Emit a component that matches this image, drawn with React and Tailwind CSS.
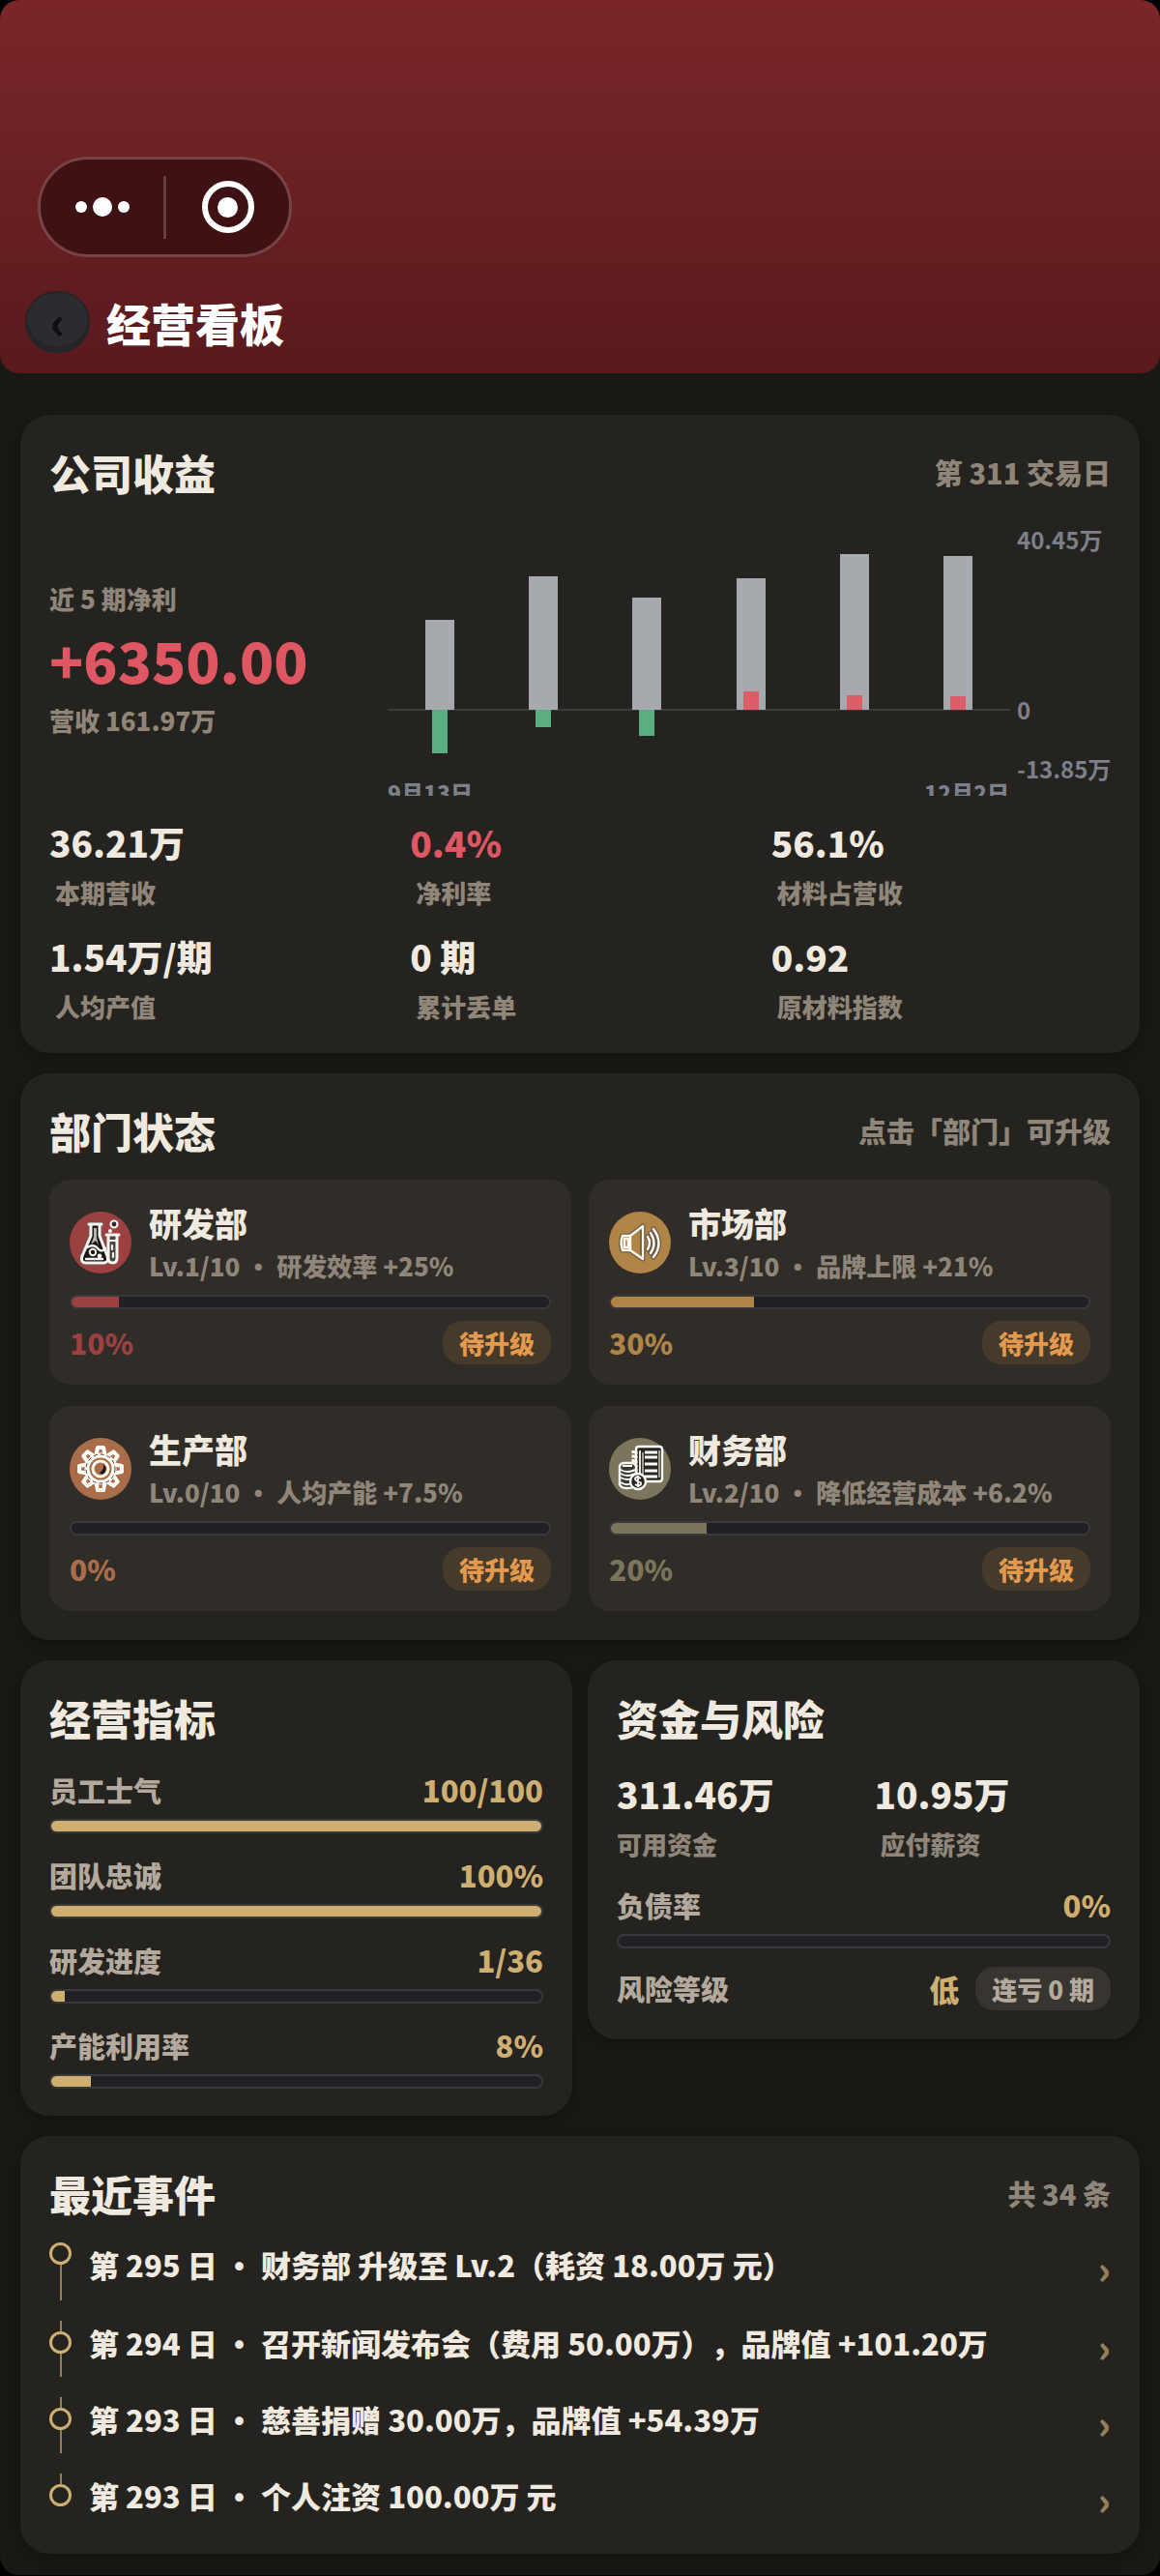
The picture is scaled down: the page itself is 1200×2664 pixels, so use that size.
import clsx from 'clsx';

const MONTHS = [
  { revenue: 93, profit: -45 },
  { revenue: 138, profit: -18 },
  { revenue: 116, profit: -27 },
  { revenue: 136, profit: 19 },
  { revenue: 161, profit: 15 },
  { revenue: 159, profit: 14 },
];

const STATS = [
  { value: '36.21万', label: '本期营收' },
  { value: '0.4%', label: '净利率', color: 'text-[#de5763]' },
  { value: '56.1%', label: '材料占营收' },
  { value: '1.54万/期', label: '人均产值' },
  { value: '0 期', label: '累计丢单' },
  { value: '0.92', label: '原材料指数' },
];

const DEPARTMENTS = [
  {
    name: '研发部',
    info: 'Lv.1/10 • 研发效率 +25%',
    percent: 10,
    icon: FlaskIcon,
    bg: 'bg-[#9c4041]',
    text: 'text-[#9c4041]',
  },
  {
    name: '市场部',
    info: 'Lv.3/10 • 品牌上限 +21%',
    percent: 30,
    icon: SpeakerIcon,
    bg: 'bg-[#b08346]',
    text: 'text-[#b08346]',
  },
  {
    name: '生产部',
    info: 'Lv.0/10 • 人均产能 +7.5%',
    percent: 0,
    icon: GearIcon,
    bg: 'bg-[#a96d4a]',
    text: 'text-[#a96d4a]',
  },
  {
    name: '财务部',
    info: 'Lv.2/10 • 降低经营成本 +6.2%',
    percent: 20,
    icon: LedgerIcon,
    bg: 'bg-[#7b765b]',
    text: 'text-[#7b765b]',
  },
];

const METRICS = [
  { label: '员工士气', value: '100/100', percent: 100 },
  { label: '团队忠诚', value: '100%', percent: 100 },
  { label: '研发进度', value: '1/36', percent: 2.8 },
  { label: '产能利用率', value: '8%', percent: 8 },
];

const EVENTS = [
  '第 295 日 • 财务部 升级至 Lv.2（耗资 18.00万 元）',
  '第 294 日 • 召开新闻发布会（费用 50.00万），品牌值 +101.20万',
  '第 293 日 • 慈善捐赠 30.00万，品牌值 +54.39万',
  '第 293 日 • 个人注资 100.00万 元',
];

/* ─── Department icons ──────────────────────────────── */

function FlaskIcon() {
  return (
    <svg viewBox="0 0 64 64" className="size-full" fill="none" strokeLinejoin="round" strokeLinecap="round">
      <path d="M20 13h13M22 14v11L13 46q-2 7 4 7h19q5-1 3-7L31 25V14" fill="#191815" stroke="#6b5a56" strokeWidth="5" />
      <path d="M20 13h13M22 14v11L13 46q-2 7 4 7h19q5-1 3-7L31 25V14" fill="#191815" stroke="#f6f3ee" strokeWidth="3" />
      <path d="M25 17v9l-3 8 5-4 3 5-2-8V17z" fill="#b9b5ae" />
      <path d="M18 37q7-4 11 1t8 0" stroke="#f6f3ee" strokeWidth="2.4" />
      <circle cx="24" cy="42" r="3.2" stroke="#f6f3ee" strokeWidth="2" />
      <circle cx="31" cy="46" r="2.4" fill="#f6f3ee" />
      <path d="M17 49h17" stroke="#f6f3ee" strokeWidth="2.4" />
      <path d="M38 24h13M40 24v24q0 5 4.5 5t4.5-5V24" fill="#4a4642" stroke="#f6f3ee" strokeWidth="3" />
      <path d="M41 30h7M44 35v4M45 43v4" stroke="#f6f3ee" strokeWidth="2.2" />
      <circle cx="46" cy="13" r="3.5" fill="#2b2724" stroke="#f6f3ee" strokeWidth="2.2" />
      <circle cx="42" cy="20" r="2" fill="#f6f3ee" />
    </svg>
  );
}

function SpeakerIcon() {
  return (
    <svg viewBox="0 0 64 64" className="size-full" fill="none" strokeLinejoin="round" strokeLinecap="round">
      <g stroke="#6b5c47" strokeWidth="5">
        <path d="M14 25h8l13-10v34L22 40h-8q-3-7 0-15z" />
        <path d="M40 26q4 6 0 13M43 22q7 11 0 21M46 18q11 15 0 29" />
      </g>
      <path d="M14 25h8l13-10v34L22 40h-8q-3-7 0-15z" fill="#b08346" />
      <g stroke="#fffaf0" strokeWidth="2.4">
        <path d="M14 25q-3 7 0 15h8l13 9V15L22 25z" />
        <path d="M16 28v9M20 28v9M16 28h4M16 37h4M22 25v15" />
        <path d="M40 26q4 6 0 13M43 22q7 11 0 21M46 18q11 15 0 29" />
      </g>
      <path d="M33 19v26" stroke="#4a3c26" strokeWidth="1" />
    </svg>
  );
}

function GearIcon() {
  const teeth = [0, 45, 90, 135, 180, 225, 270, 315];
  return (
    <svg viewBox="0 0 64 64" className="size-full" fill="none" strokeLinejoin="round">
      {teeth.map((a) => (
        <path key={a} d="M27 20l2-10h6l2 10" transform={`rotate(${a} 32 32)`} fill="#a96d4a" stroke="#fffdf8" strokeWidth="4" />
      ))}
      <circle cx="32" cy="32" r="14" fill="#a96d4a" stroke="#fffdf8" strokeWidth="5" />
      <circle cx="32" cy="32" r="15" stroke="#4a3628" strokeWidth="1" strokeDasharray="4 3" />
      <circle cx="32" cy="32" r="8" fill="#a96d4a" stroke="#fffdf8" strokeWidth="3" />
      <path d="M35 27q5 5 0 10-3 1-4-1 5-3 4-9z" fill="#191815" />
    </svg>
  );
}

function LedgerIcon() {
  return (
    <svg viewBox="0 0 64 64" className="size-full" fill="none" strokeLinejoin="round">
      <path d="M28 12q0-3 3-3h21q3 0 3 3v30q0 3-3 3H31q-3 0-3-3z" fill="#26251f" stroke="#fffdf8" strokeWidth="2.4" />
      <path d="M32 13v26" stroke="#e6e3db" strokeWidth="2" />
      <path d="M35 15v26M52 13v28" stroke="#c9c6bd" strokeWidth="1.5" />
      <path d="M37 15h13M37 20h13M37 27h13M37 34h13M37 40h13" stroke="#fffdf8" strokeWidth="3" />
      <path d="M25 13v34M28 14v24" stroke="#fffdf8" strokeWidth="3" strokeDasharray="3 1.5" />
      <path d="M11 29q1-3 5-3h7q4 0 5 3v19q-2 4-9 4t-8-4z" fill="#3a3932" stroke="#fffdf8" strokeWidth="2.4" />
      <path d="M12 33q7 4 15 0M12 37q7 4 15 0M12 41q7 4 14 0M12 46q6 4 11 1M14 29h10" stroke="#fffdf8" strokeWidth="2" />
      <circle cx="30" cy="45" r="8" fill="#26251f" stroke="#fffdf8" strokeWidth="2.4" />
      <path d="M33 42q-5-3-6 0 0 2 3 3 4 1 3 3-2 3-6 0M30 39v12" stroke="#fffdf8" strokeWidth="1.8" />
    </svg>
  );
}

/* ─── Shared pieces ─────────────────────────────────── */

function Card({ title, note, className, children }) {
  return (
    <section
      className={clsx('rounded-[30px] bg-[#24231f] p-[30px] shadow-[0_4px_14px_rgba(0,0,0,0.3)]', className)}
    >
      <div className="flex items-center justify-between">
        <h2 className="text-[43px] leading-[58px] font-black text-[#efe9df]">{title}</h2>
        {note && <span className="text-[29px] leading-[58px] text-[#8f8679]">{note}</span>}
      </div>
      {children}
    </section>
  );
}

function ProgressBar({ label, percent, color }) {
  return (
    <div
      role="progressbar"
      aria-label={label}
      aria-valuenow={percent}
      aria-valuemin={0}
      aria-valuemax={100}
      className="h-[15px] w-full overflow-hidden rounded-full border-2 border-[#39383c] bg-[#212025]"
    >
      <div className={clsx('h-full', color)} style={{ width: `${percent}%` }} />
    </div>
  );
}

function Metric({ label, value, percent }) {
  return (
    <div>
      <div className="flex items-center justify-between leading-[48px]">
        <span className="text-[29px] text-[#b3a99c]">{label}</span>
        <span className="text-[31px] text-[#cfae72]">{value}</span>
      </div>
      <div className="mt-[6px]">
        <ProgressBar label={label} percent={percent} color="bg-[#cfae72]" />
      </div>
    </div>
  );
}

function Stat({ value, label, color = 'text-[#efe9df]', inset = true }) {
  return (
    <div>
      <div className={clsx('text-[37px] leading-[68px]', color)}>{value}</div>
      <div className={clsx('text-[26px] leading-9 text-[#8f8679]', inset && 'pl-[6px]')}>{label}</div>
    </div>
  );
}

function ProfitChart() {
  const step = 107.3;
  return (
    <svg viewBox="0 0 748 283" className="min-w-0 flex-1 overflow-hidden" role="img" aria-label="近期营收与净利">
      <path d="M0 194h644" stroke="#3b3b3e" strokeWidth="2" />
      {MONTHS.map(({ revenue, profit }, i) => {
        const center = Math.round(step * (i + 0.5));
        return (
          <g key={i}>
            <rect x={center - 15} y={194 - revenue} width="30" height={revenue} fill="#a6a9ae" />
            <rect
              x={center - 8}
              y={profit > 0 ? 194 - profit : 194}
              width="16"
              height={Math.abs(profit)}
              fill={profit > 0 ? '#dc5c68' : '#5aae81'}
            />
          </g>
        );
      })}
      <g className="font-bold" fill="#7d7f8b" fontSize="24">
        <text x="651" y="28">40.45万</text>
        <text x="651" y="204">0</text>
        <text x="651" y="265">-13.85万</text>
      </g>
      <g fill="#7d7f8b" fontSize="23">
        <text x="0" y="289">9月13日</text>
        <text x="643" y="289" textAnchor="end">12月2日</text>
      </g>
    </svg>
  );
}

/* ─── Page sections ─────────────────────────────────── */

function Header() {
  return (
    <header className="rounded-[20px] bg-linear-to-b from-[#7a2628] to-[#591a1d] px-[26px] pt-[162px] pb-[21px]">
      <div className="ml-[13px] flex h-[104px] w-[263px] items-center rounded-full border-[3px] border-[#774345] bg-[#3e1214]">
        <button type="button" aria-label="更多" className="flex flex-1 items-center justify-center gap-[6px]">
          <span className="size-3 rounded-full bg-white" />
          <span className="size-5 rounded-full bg-white" />
          <span className="size-3 rounded-full bg-white" />
        </button>
        <span className="h-[65px] w-[3px] bg-[#694041]" />
        <button type="button" aria-label="关闭" className="flex flex-1 items-center justify-center">
          <span className="flex size-[54px] items-center justify-center rounded-full border-[6px] border-white">
            <span className="size-[21px] rounded-full bg-white" />
          </span>
        </button>
      </div>
      <div className="mt-[35px] flex items-center gap-[17px]">
        <button
          type="button"
          aria-label="返回"
          className="flex h-16 w-[67px] items-center justify-center rounded-full border-2 border-[#252428] bg-[#2c2b30] pb-1 text-[46px] leading-none text-[#0f0f10] shadow-[inset_0_-5px_0_#252428]"
        >
          ‹
        </button>
        <h1 className="text-[46px] leading-[64px] font-black text-white">经营看板</h1>
      </div>
    </header>
  );
}

function Department({ name, info, percent, icon: Icon, bg, text }) {
  return (
    <button type="button" className="rounded-[22px] bg-[#302d29] p-[21px] text-left">
      <div className="flex items-center gap-[18px]">
        <div className={clsx('size-16 shrink-0 rounded-full', bg)}>
          <Icon />
        </div>
        <div className="whitespace-nowrap">
          <div className="text-[34px] leading-[48px] text-[#efe9df]">{name}</div>
          <div className="text-[26px] leading-10 text-[#8f8679]">{info}</div>
        </div>
      </div>
      <div className="mt-[10px]">
        <ProgressBar label={name} percent={percent} color={bg} />
      </div>
      <div className="mt-3 flex items-center justify-between">
        <span className={clsx('text-[30px] leading-[45px]', text)}>{percent}%</span>
        <span className="rounded-[20px] bg-[#463a2b] px-[17px] text-[26px] leading-[45px] text-[#e39a4e]">待升级</span>
      </div>
    </button>
  );
}

function EventRow({ text, first, last }) {
  return (
    <li>
      <button type="button" className="flex w-full items-stretch gap-[18px] text-left">
        <span className={clsx('flex w-[23px] shrink-0 flex-col items-center', first ? 'h-[60px]' : 'h-[58px]')}>
          {!first && <span className="h-[11px] w-[2px] bg-[#957f56]" />}
          <span className="size-[23px] shrink-0 rounded-full border-[3px] border-[#cfae72]" />
          {!last && <span className="w-[2px] flex-1 bg-[#957f56]" />}
        </span>
        <span className="flex-1 text-[31px] leading-[46px] text-[#efe9df] [text-spacing-trim:space-all]">{text}</span>
        <span className="pt-1 text-[40px] leading-[46px] text-[#957f56]">›</span>
      </button>
    </li>
  );
}

function App() {
  return (
    <div className="min-h-screen bg-black font-['Noto_Sans_CJK_SC',sans-serif] font-black">
      <div className="rounded-[20px] bg-[#191815]">
        <Header />

        <main className="flex flex-col gap-[21px] px-[21px] pt-[43px] pb-[22px]">
          <Card title="公司收益" note="第 311 交易日">
            <div className="mt-[23px] flex items-center">
              <div className="w-[350px] shrink-0 text-[26px] leading-9 text-[#8f8679]">
                <div>近 5 期净利</div>
                <div className="text-[58px] leading-[90px] text-[#de5763]">+6350.00</div>
                <div>营收 161.97万</div>
              </div>
              <ProfitChart />
            </div>
            <div className="mt-[14px] grid grid-cols-3 gap-x-[22px] gap-y-[14px]">
              {STATS.map((stat) => (
                <Stat key={stat.label} {...stat} />
              ))}
            </div>
          </Card>

          <Card title="部门状态" note="点击「部门」可升级">
            <div className="mt-[22px] grid grid-cols-2 gap-x-[18px] gap-y-[22px]">
              {DEPARTMENTS.map((dept) => (
                <Department key={dept.name} {...dept} />
              ))}
            </div>
          </Card>

          <div className="grid grid-cols-2 items-start gap-4">
            <Card title="经营指标" className="pb-7">
              <div className="mt-[22px] flex flex-col gap-[19px]">
                {METRICS.map((metric) => (
                  <Metric key={metric.label} {...metric} />
                ))}
              </div>
            </Card>

            <Card title="资金与风险">
              <div className="mt-4 mb-[21px] grid grid-cols-2 gap-x-[22px]">
                <Stat value="311.46万" label="可用资金" inset={false} />
                <Stat value="10.95万" label="应付薪资" />
              </div>
              <Metric label="负债率" value="0%" percent={0} />
              <div className="mt-[19px] flex items-center leading-[45px]">
                <span className="flex-1 text-[29px] text-[#b3a99c]">风险等级</span>
                <span className="text-[31px] text-[#cfae72]">低</span>
                <span className="ml-[17px] rounded-[20px] bg-[#383531] px-[17px] text-[26px] text-[#b3a99c]">
                  连亏 0 期
                </span>
              </div>
            </Card>
          </div>

          <Card title="最近事件" note="共 34 条" className="pb-[25px]">
            <ul className="mt-[22px] flex flex-col gap-[21px]">
              {EVENTS.map((text, i) => (
                <EventRow key={text} text={text} first={i === 0} last={i === EVENTS.length - 1} />
              ))}
            </ul>
          </Card>
        </main>
      </div>
    </div>
  );
}

export default App;
